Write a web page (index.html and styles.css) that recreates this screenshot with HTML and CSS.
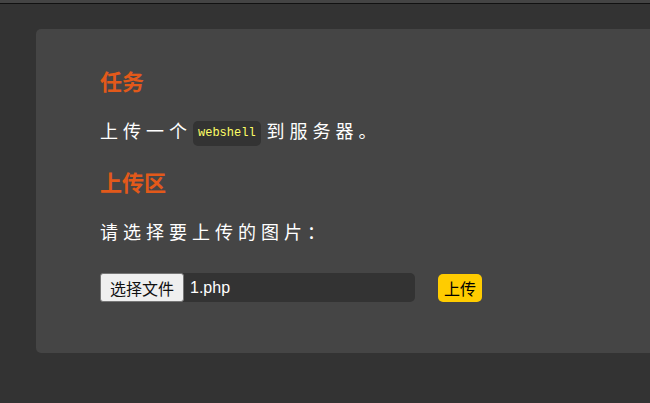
FILE: index.html
```html
<!DOCTYPE html>
<html lang="zh-CN">
  <head>
    <meta charset="UTF-8" />
    <meta name="viewport" content="width=device-width, initial-scale=1" />
    <title>上传</title>
    <link rel="stylesheet" href="styles.css">
  </head>
  <body>
    <div class="top-bar"></div>
    <div class="card">
      <h3 class="title">任务</h3>
      <p class="desc">上传一个<code>webshell</code>到服务器。</p>
      <h3 class="title">上传区</h3>
      <p class="desc">请选择要上传的图片：</p>
      <form class="upload-form" onsubmit="return false">
        <label class="file-field">
          <span class="file-btn">选择文件</span>
          <span class="file-name">1.php</span>
        </label>
        <button class="upload-btn" type="submit">上传</button>
      </form>
    </div>
  </body>
</html>
```

FILE: styles.css
```css
html, body {
  margin: 0;
  padding: 0;
  background: #333;
  overflow: hidden;
  font-family: "Liberation Sans", "Noto Sans CJK SC", sans-serif;
}
.top-bar {
  height: 3px;
  background: #444;
  border-bottom: 1px solid #111;
}
.card {
  margin: 25px -30px 0 36px;
  padding: 36px 64px 51px;
  background: #454545;
  border-radius: 5px;
}
.title {
  margin: 0;
  font-size: 22px;
  line-height: 30px;
  font-weight: bold;
  color: #e2591a;
  font-family: "Noto Sans CJK SC", sans-serif;
}
.desc {
  margin: 20px 0 20px;
  font-size: 18px;
  line-height: 30px;
  letter-spacing: 5px;
  color: #fff;
  font-family: "Noto Sans CJK SC", sans-serif;
}
.desc code {
  display: inline-block;
  margin: 0 6px 0 1px;
  padding: 0 5px;
  height: 25px;
  line-height: 25px;
  vertical-align: 2px;
  letter-spacing: 0;
  font-family: "Liberation Mono", monospace;
  font-size: 12px;
  color: #ffff66;
  background: #333;
  border-radius: 5px;
}
.upload-form {
  display: flex;
  align-items: center;
  gap: 23px;
  margin-top: 27px;
}
.file-field {
  display: flex;
  align-items: center;
  width: 315px;
  height: 29px;
  background: #333;
  border-radius: 5px;
}
.file-btn {
  box-sizing: border-box;
  height: 29px;
  padding: 0 9px;
  display: flex;
  align-items: center;
  font-size: 16px;
  color: #111;
  background: #efefef;
  border: 1px solid #767676;
  border-radius: 3px;
  font-family: "Noto Sans CJK SC", sans-serif;
}
.file-name {
  margin-left: 6px;
  font-size: 16px;
  color: #fff;
}
.upload-btn {
  height: 28px;
  padding: 0 6px;
  border: none;
  border-radius: 5px;
  background: #ffcc00;
  color: #000;
  font-size: 16px;
  font-family: "Noto Sans CJK SC", sans-serif;
}
```
